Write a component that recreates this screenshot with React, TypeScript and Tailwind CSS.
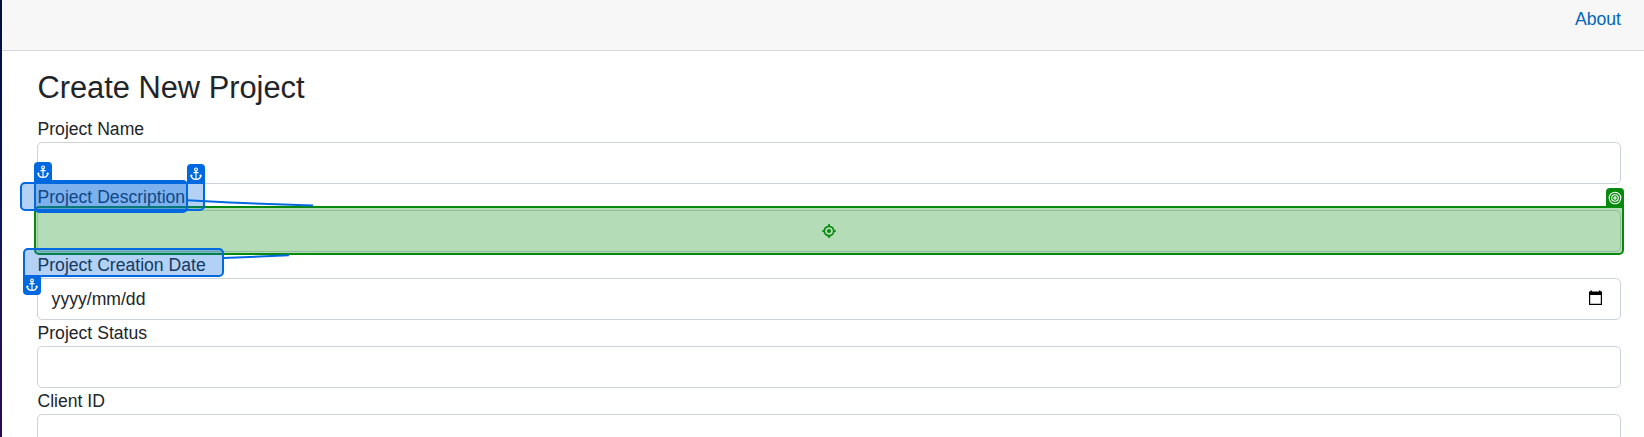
import type { ReactNode } from "react";

function AnchorIcon() {
  return (
    <svg viewBox="0 0 12 14" className="h-[14px] w-[12px]" fill="none" stroke="#fff" strokeWidth="1.2">
      <circle cx="6" cy="2.4" r="1.4" />
      <path d="M6 3.8V12.3M3.4 5.6H8.6M1.2 8.4C1.4 11.2 3.4 12.4 6 12.4S10.6 11.2 10.8 8.4M0.4 9.4L1.2 8.2L2.4 9M11.6 9.4L10.8 8.2L9.6 9" />
    </svg>
  );
}

function Tag({ className }: { className: string }) {
  return (
    <div className={`absolute flex h-[20px] w-[18px] items-center justify-center bg-[#0069e0] ${className}`}>
      <AnchorIcon />
    </div>
  );
}

function Field({ label, children, marks }: { label: string; children?: ReactNode; marks?: ReactNode }) {
  return (
    <div className="relative">
      <div className="h-[26px] pl-[0.5px] leading-[26px]">{label}</div>
      <div className="flex h-[42px] items-center justify-between rounded-[5px] border border-[#ced2da] bg-white pr-[18px] pl-[13.6px]">
        {children}
      </div>
      {marks}
    </div>
  );
}

function DescriptionMarks() {
  return (
    <>
      <div className="absolute -inset-x-[3px] top-[22px] z-10 flex h-[49px] items-center justify-center rounded-b-[5px] rounded-tl-[5px] border-2 border-[#058a0d] bg-[#058a0d]/30">
        <svg viewBox="0 0 14 14" className="h-[14px] w-[14px]" fill="none" stroke="#058a0d" strokeWidth="1.7">
          <circle cx="7" cy="7" r="4.7" />
          <path d="M7 0V2.5M7 11.5V14M0 7H2.5M11.5 7H14" />
          <circle cx="7" cy="7" r="2" fill="#058a0d" stroke="none" />
        </svg>
        <div className="absolute -top-[20px] -right-[2px] flex h-[19px] w-[18px] items-center justify-center rounded-t-[4px] bg-[#058a0d]">
          <svg viewBox="0 0 14 14" className="h-[14px] w-[14px]" fill="none" stroke="#fff" strokeWidth="1.1">
            <circle cx="7" cy="7" r="5.8" />
            <circle cx="7" cy="7" r="3.3" />
            <circle cx="7" cy="7" r="1.1" />
          </svg>
        </div>
      </div>
      <div className="absolute top-[-2px] left-[-17px] z-20 h-[29px] w-[185px] rounded-[5px] rounded-tr-none border-2 border-[#0069e0] bg-[#0069e0]/30">
        <Tag className="-top-[20px] -right-[2px] rounded-t-[4px]" />
      </div>
      <div className="absolute top-[-4px] left-[-3px] z-20 h-[33px] w-[154px] rounded-[5px] rounded-tl-none border-2 border-[#0069e0] bg-[#0069e0]/30">
        <Tag className="-top-[20px] -left-[2px] rounded-t-[4px]" />
      </div>
      <svg viewBox="0 0 128 10" className="absolute top-[14px] left-[150px] z-20 h-[10px] w-[128px]" fill="none" stroke="#0069e0" strokeWidth="2">
        <path d="M0 2.2L43 4.6L126 7.6" />
      </svg>
    </>
  );
}

function DateMarks() {
  return (
    <>
      <div className="absolute top-[-4px] left-[-14px] z-20 h-[29px] w-[201px] rounded-[5px] rounded-bl-none border-2 border-[#0069e0] bg-[#0069e0]/30">
        <Tag className="-bottom-[20px] -left-[2px] rounded-b-[4px]" />
      </div>
      <svg viewBox="0 0 68 8" className="absolute top-[1px] left-[186px] z-20 h-[8px] w-[68px]" fill="none" stroke="#0069e0" strokeWidth="2">
        <path d="M0 5.1L66 2.2" />
      </svg>
    </>
  );
}

export default function App() {
  return (
    <div className="flex h-[437px] w-full overflow-hidden bg-white font-['Liberation_Sans',Arial,sans-serif] text-[17.6px] text-[#212529]">
      <div className="w-[2px] shrink-0 bg-linear-to-b from-[#00103a] via-[#0b1562] to-[#2b0a50]" />
      <div className="flex grow flex-col">
        <header className="flex h-[51px] shrink-0 justify-end border-b border-[#d6d5d5] bg-[#f7f7f7] pt-[6px] pr-[23px]">
          <a className="leading-[26px] text-[#0366b9]">About</a>
        </header>
        <main className="flex flex-col pr-[23px] pl-[35px]">
          <h1 className="h-[65px] pt-[18px] pl-[0.5px] text-[30.8px] leading-[37px]">Create New Project</h1>
          <Field label="Project Name" />
          <Field label="Project Description" marks={<DescriptionMarks />} />
          <Field label="Project Creation Date" marks={<DateMarks />}>
            <span>yyyy/mm/dd</span>
            <svg viewBox="0 0 14 15" className="mb-[3px] h-[15px] w-[14px] text-black">
              <path fill="currentColor" fillRule="evenodd" d="M2.5 0.5H4V1.5H11V0.5H12.5V1.5H14V15H1V1.5H2.5ZM2.2 5V13.8H12.8V5Z" />
            </svg>
          </Field>
          <Field label="Project Status" />
          <Field label="Client ID" />
        </main>
      </div>
    </div>
  );
}
